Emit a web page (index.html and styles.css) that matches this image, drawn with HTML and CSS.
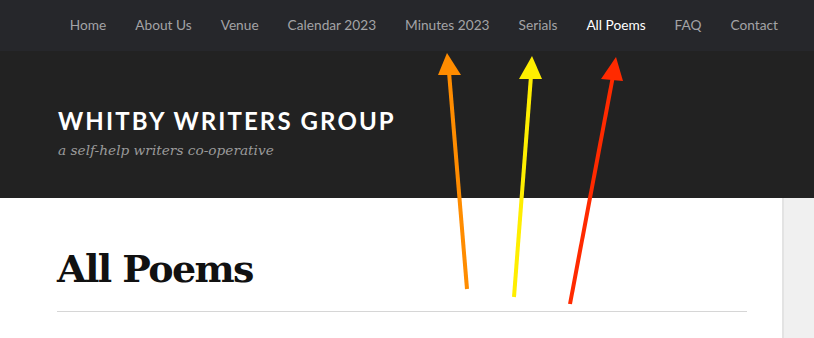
FILE: index.html
```html
<!DOCTYPE html>
<html lang="en">

<head>
  <meta charset="UTF-8">
  <meta name="viewport" content="width=device-width, initial-scale=1.0">
  <title>All Poems - Whitby Writers Group</title>
  <link rel="stylesheet" href="styles.css">
</head>

<body>
  <nav class="top-nav">
    <a href="#">Home</a>
    <a href="#">About Us</a>
    <a href="#">Venue</a>
    <a href="#">Calendar 2023</a>
    <a href="#">Minutes 2023</a>
    <a href="#">Serials</a>
    <a href="#" class="current">All Poems</a>
    <a href="#">FAQ</a>
    <a href="#">Contact</a>
  </nav>

  <header class="site-header">
    <h1 class="site-title">Whitby Writers Group</h1>
    <p class="site-desc">a self-help writers co-operative</p>
  </header>

  <div class="page">
    <main class="content">
      <h2 class="entry-title">All Poems</h2>
      <hr class="rule">
    </main>
    <aside class="sidebar"></aside>
  </div>

  <!-- annotation arrows drawn over the screenshot -->
  <svg class="arrows" width="814" height="338" viewBox="0 0 814 338">
    <line x1="467" y1="289" x2="449" y2="72" stroke="#ff8c00" stroke-width="4" />
    <polygon points="447,53 438,75 461,75" fill="#ff8c00" />
    <line x1="514" y1="297" x2="531" y2="76" stroke="#ffee00" stroke-width="4" />
    <polygon points="532,56 519,79 542,79" fill="#ffee00" />
    <line x1="570" y1="304" x2="613" y2="76" stroke="#ff2a00" stroke-width="4" />
    <polygon points="616,57 601,79 623,81" fill="#ff2a00" />
  </svg>
</body>

</html>
```

FILE: styles.css
```css
* {
  margin: 0;
  padding: 0;
  box-sizing: border-box;
}

body {
  font-family: Lato, "Open Sans", sans-serif;
  background: #fff;
  overflow: hidden;
  position: relative;
}

.top-nav {
  height: 51px;
  background: #26272b;
  display: flex;
  justify-content: flex-end;
  align-items: center;
  gap: 29px;
  padding: 0 36px 2px 0;
}

.top-nav a {
  color: #a3a3a6;
  font-size: 13.7px;
  text-decoration: none;
}

.top-nav a.current {
  color: #fff;
}

.site-header {
  height: 147px;
  background: #222;
  padding: 55px 0 0 58px;
}

.site-title {
  color: #fff;
  font-size: 24px;
  font-weight: 700;
  text-transform: uppercase;
  letter-spacing: 2.1px;
  line-height: 30px;
}

.site-desc {
  color: #9a9a9a;
  font-family: "DejaVu Serif", serif;
  font-style: italic;
  font-size: 13.7px;
  line-height: 20px;
  margin-top: 4px;
}

.page {
  display: flex;
  height: 140px;
}

.content {
  flex: 1;
  padding: 47px 35px 0 57px;
}

.entry-title {
  font-family: "DejaVu Serif", serif;
  font-weight: 700;
  font-size: 38px;
  line-height: 48px;
  color: #111;
  letter-spacing: -1.6px;
}

.rule {
  border: 0;
  border-top: 1px solid #d6d6d6;
  margin-top: 18px;
}

.sidebar {
  width: 32px;
  background: #f0f0f0;
  border-left: 2px solid #e3e3e3;
}

.arrows {
  position: absolute;
  top: 0;
  left: 0;
}
```
